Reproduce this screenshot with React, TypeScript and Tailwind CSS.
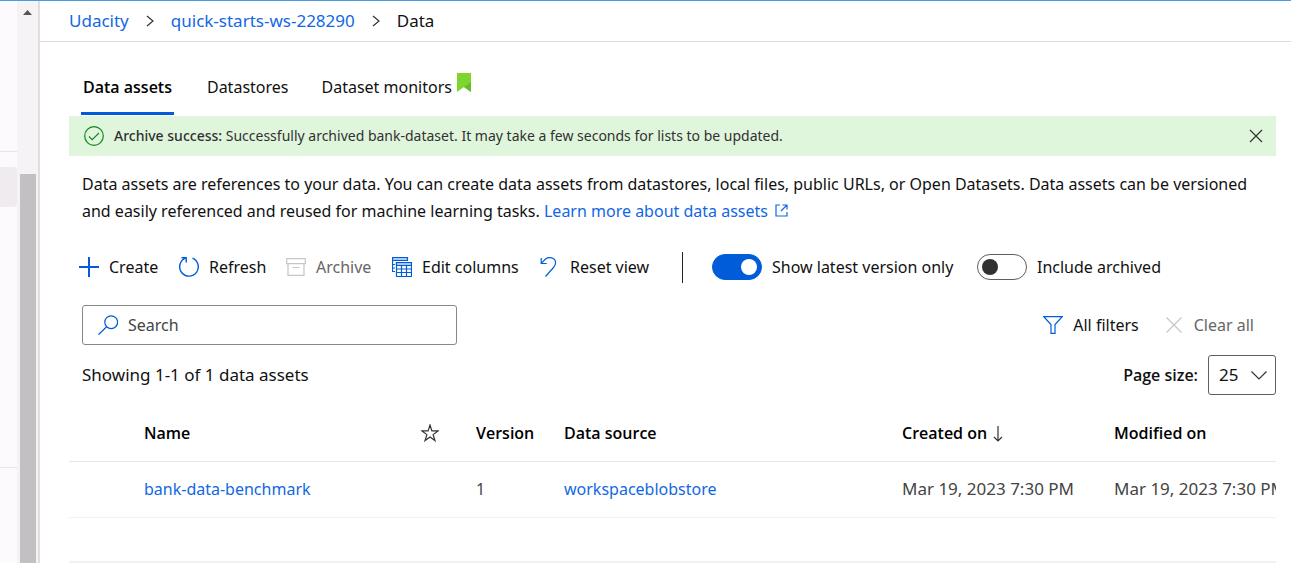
import { useState, type ReactNode } from "react";

type IconProps = { children: ReactNode; className?: string };

function Icon({ children, className = "text-[#015cda]" }: IconProps) {
  return (
    <svg viewBox="0 0 20 20" width="20" height="20" fill="none" stroke="currentColor" strokeWidth="1.2" className={`shrink-0 ${className}`} aria-hidden="true">
      {children}
    </svg>
  );
}

function ToolButton({ icon, label, disabled, className }: { icon: ReactNode; label: string; disabled?: boolean; className: string }) {
  return (
    <button type="button" disabled={disabled} className={`flex shrink-0 items-center gap-2.5 whitespace-nowrap disabled:text-[#666] ${className}`}>
      {icon}
      {label}
    </button>
  );
}

function Toggle({ label, initial, className }: { label: string; initial: boolean; className: string }) {
  const [on, setOn] = useState(initial);
  return (
    <label className={`flex shrink-0 items-center gap-2.5 whitespace-nowrap ${className}`}>
      <input type="checkbox" role="switch" checked={on} onChange={() => setOn(!on)} className="peer sr-only" />
      <span className="flex h-[26px] w-[50px] items-center rounded-full border border-[#605e5c] bg-white px-1 peer-checked:justify-end peer-checked:border-[#015cda] peer-checked:bg-[#015cda] peer-checked:[&>span]:bg-white">
        <span className="size-4 rounded-full bg-[#323130]" />
      </span>
      {label}
    </label>
  );
}

function Crumb() {
  return (
    <svg viewBox="0 0 8 12" width="8" height="12" fill="none" stroke="#333" strokeWidth="1.2" aria-hidden="true">
      <path d="M1 1l6 5-6 5" />
    </svg>
  );
}

export default function App() {
  return (
    <div className="flex h-screen overflow-hidden border-t border-[#4a9be0] bg-white font-['Noto_Sans','Open_Sans',sans-serif] text-base text-[#111]">
      <aside className="w-[17px] shrink-0 bg-[#fdfafe]">
        <div className="h-[151px] border-b border-[#e8e3e8]" />
        <div className="mt-[15px] h-10 rounded-r bg-[#efebef]" />
        <div className="h-[261px] border-b border-[#e8e3e8]" />
      </aside>
      <div className="flex w-[23px] shrink-0 flex-col border-r-2 border-[#e1dde1] bg-[#f6f3f7] pr-[2px] pl-[2px]">
        <svg viewBox="0 0 17 17" className="mt-[2px] h-[17px] w-full" aria-hidden="true">
          <path d="M4 12l4.500-5 4.500 5z" fill="#555" />
        </svg>
        <div className="mt-[154px] ml-px w-4 flex-1 bg-[#c3c0c4]" />
      </div>
      <main className="min-w-0 flex-1">
        <nav aria-label="Breadcrumb" className="flex h-[41px] items-center gap-[17px] border-b border-[#dcdcdc] pl-[29px] text-[17px]">
          <a href="#udacity" className="text-[#1267e4]">Udacity</a>
          <Crumb />
          <a href="#workspace" className="text-[#1267e4]">quick-starts-ws-228290</a>
          <Crumb />
          <span>Data</span>
        </nav>
        <div className="pt-[18px] pr-[15px] pl-[29px]">
          <div role="tablist" className="flex h-[55px] items-stretch gap-[23px] pl-3">
            <button type="button" role="tab" aria-selected="true" className="border-b-3 border-[#015cda] px-[2px] pt-px font-['Open_Sans','Noto_Sans',sans-serif] font-semibold text-black">Data assets</button>
            <button type="button" role="tab" aria-selected="false" className="border-b-3 border-transparent px-2.5 pt-px">Datastores</button>
            <button type="button" role="tab" aria-selected="false" className="flex items-center border-b-3 border-transparent pt-px">
              Dataset monitors
              <svg viewBox="0 0 14 20" width="14" height="20" className="mb-2 ml-[5px]" aria-hidden="true">
                <path d="M0 0h14v19l-7-5-7 5z" fill="#7fd52f" />
                <path d="M7 14l7-5v10z" fill="#68bd27" />
              </svg>
            </button>
          </div>
          <div role="status" className="mt-px flex h-10 items-center bg-[#dff6dd] pr-3 pl-[15px] text-sm text-[#323130]">
            <Icon className="text-[#16841a]"><circle cx="10" cy="10" r="9.300" /><path d="M5 10.500l3.200 3.200L15 7" /></Icon>
            <p className="ml-2.5 flex-1"><span className="font-medium">Archive success:</span> Successfully archived bank-dataset. It may take a few seconds for lists to be updated.</p>
            <button type="button" aria-label="Dismiss">
              <svg viewBox="0 0 14 14" width="14" height="14" stroke="#333" strokeWidth="1.200" className="mr-px" aria-hidden="true"><path d="M1 1l12 12M13 1L1 13" /></svg>
            </button>
          </div>
          <p className="mt-[15px] pl-[13px] leading-[27px]">
            Data assets are references to your data. You can create data assets from datastores, local files, public URLs, or Open Datasets. Data assets can be versioned and easily referenced and reused for machine learning tasks.{" "}
            <a href="#learn" className="text-[#1267e4]">
              Learn more about data assets
              <svg viewBox="0 0 13 13" width="13" height="13" fill="none" stroke="currentColor" strokeWidth="1.200" className="ml-[7px] inline align-baseline" aria-hidden="true">
                <path d="M5 1H1v11h11V8M7.500 1H12v4.500M12 1L6 7" />
              </svg>
            </a>
          </p>
          <div className="mt-[23px] flex h-[38px] items-center pl-2.5">
            <ToolButton className="w-[100px]" label="Create" icon={<Icon><path d="M10 0v20M0 10h20" strokeWidth="2" /></Icon>} />
            <ToolButton className="w-[107px]" label="Refresh" icon={<Icon><path d="M13.500 1.200a9.300 9.300 0 1 1-7.500.2M2.500 .7h4.700v4.800" strokeWidth="1.400" /></Icon>} />
            <ToolButton className="w-[106px]" label="Archive" disabled icon={<Icon className="text-[#c8c6c4]"><path d="M.7 1.700h18.600v5H.7zM2 6.700h16v11.600H2zM6.500 10.500h7" /></Icon>} />
            <ToolButton className="w-[148px]" label="Edit columns" icon={
              <Icon>
                <path d="M.5.500h15v3H.500z" fill="#a9c8f5" />
                <path d="M.5 3.500v11H3M.5 7.500H3M.5 11H3" />
                <path d="M4.500 5.500h15v14h-15z" fill="#fff" />
                <path d="M4.500 5.500h15v3h-15z" fill="#a9c8f5" />
                <path d="M4.500 12h15M4.500 15.500h15M9.500 8.500v11M14.500 8.500v11" />
              </Icon>
            } />
            <ToolButton className="w-[142px]" label="Reset view" icon={<Icon><path d="M1.200 1v5.500h5.500M1.500 6.200L5.500 2C9-.5 15 .5 15.500 5c.3 2.500-.5 4-2 5.500L5.500 19.500" /></Icon>} />
            <div className="mr-[29px] h-[31px] w-px shrink-0 bg-[#222]" />
            <Toggle className="w-[265px]" label="Show latest version only" initial />
            <Toggle className="" label="Include archived" initial={false} />
          </div>
          <div className="mt-[19px] flex items-center justify-between pr-[22px] pl-[13px]">
            <label className="flex h-10 w-[375px] items-center gap-2.5 rounded-[3px] border border-[#8a8886] px-[15px]">
              <Icon><circle cx="13.200" cy="7.200" r="6.400" /><path d="M8.600 11.800L.5 19.700" /></Icon>
              <input type="text" placeholder="Search" aria-label="Search" className="min-w-0 flex-1 outline-none placeholder:text-[#454545]" />
            </label>
            <div className="flex items-center">
              <ToolButton className="mr-[27px]" label="All filters" icon={<Icon><path d="M.8 1.700h18.400L12 9.500v8.800H8V9.500z" /></Icon>} />
              <ToolButton className="gap-3" label="Clear all" disabled icon={
                <svg viewBox="0 0 16 16" width="16" height="16" stroke="#c8c6c4" strokeWidth="1.200" aria-hidden="true"><path d="M.5.500l15 15M15.500.500l-15 15" /></svg>
              } />
            </div>
          </div>
          <div className="mt-[10px] flex h-10 items-center justify-between pl-[13px]">
            <span className="text-[17px]">Showing 1-1 of 1 data assets</span>
            <div className="flex items-center gap-2.5">
              <label htmlFor="page-size" className="font-['Open_Sans','Noto_Sans',sans-serif] font-semibold">Page size:</label>
              <div className="grid items-center">
                <select id="page-size" defaultValue="25" className="col-start-1 row-start-1 h-10 w-[68px] appearance-none rounded-[3px] border border-[#605e5c] bg-white pl-2.5 text-[17px]">
                  <option>25</option>
                  <option>50</option>
                  <option>100</option>
                </select>
                <svg viewBox="0 0 16 9" width="16" height="9" fill="none" stroke="#333" strokeWidth="1.200" className="pointer-events-none col-start-1 row-start-1 mr-[9px] justify-self-end" aria-hidden="true"><path d="M.5.500L8 8l7.500-7.500" /></svg>
              </div>
            </div>
          </div>
          <div className="mt-[10px] overflow-hidden border-b-2 border-[#f3eff3] pb-[43px]">
            <table className="w-full min-w-[1206px] table-fixed border-collapse text-left whitespace-nowrap">
              <colgroup>
                <col className="w-[75px]" />
                <col className="w-[277px]" />
                <col className="w-[55px]" />
                <col className="w-[88px]" />
                <col className="w-[338px]" />
                <col className="w-[212px]" />
                <col />
              </colgroup>
              <thead>
                <tr className="h-14 border-b border-[#e6e6e6] font-['Open_Sans','Noto_Sans',sans-serif] text-black">
                  <th />
                  <th className="font-semibold">Name</th>
                  <th>
                    <svg viewBox="0 0 18 18" width="18" height="18" fill="none" stroke="#333" strokeWidth="1.200" role="img" aria-label="Favorite">
                      <path d="M9 1l1.900 5.900H17l-4.900 3.700 1.900 6L9 13l-5 3.600 1.900-6L1 6.900h6.100z" />
                    </svg>
                  </th>
                  <th className="font-semibold">Version</th>
                  <th className="font-semibold">Data source</th>
                  <th aria-sort="descending" className="font-semibold">
                    Created on
                    <svg viewBox="0 0 10 16" width="10" height="16" fill="none" stroke="#333" strokeWidth="1.200" className="ml-[6px] inline align-middle" aria-hidden="true"><path d="M5 0v15M1 11l4 4 4-4" /></svg>
                  </th>
                  <th className="font-semibold">Modified on</th>
                </tr>
              </thead>
              <tbody>
                <tr className="h-14 border-b border-[#f2f2f2] text-[#444]">
                  <td />
                  <td><a href="#asset" className="text-[#1267e4]">bank-data-benchmark</a></td>
                  <td />
                  <td>1</td>
                  <td><a href="#store" className="text-[#1267e4]">workspaceblobstore</a></td>
                  <td className="text-[17px]">Mar 19, 2023 7:30 PM</td>
                  <td className="overflow-hidden text-[17px] text-clip">Mar 19, 2023 7:30 PM</td>
                </tr>
              </tbody>
            </table>
          </div>
        </div>
      </main>
    </div>
  );
}
